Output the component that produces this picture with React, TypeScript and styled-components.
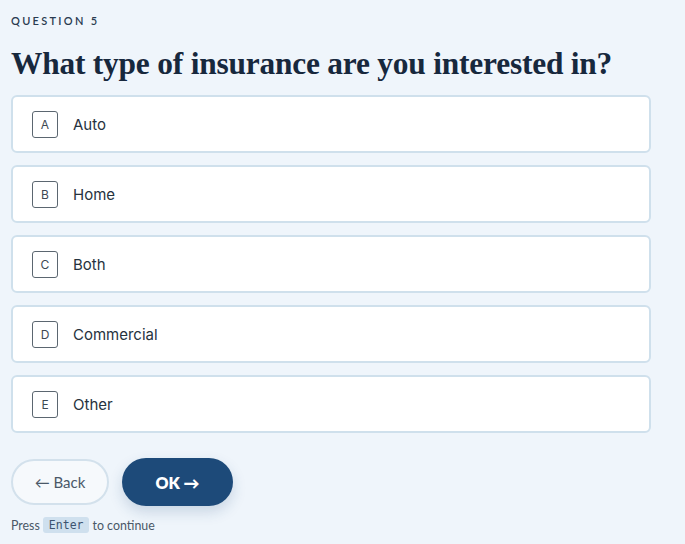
import React from "react";
import styled, { createGlobalStyle } from "styled-components";

const Global = createGlobalStyle`
  html, body { margin: 0; padding: 0; background: #eff5fb; }
  body { font-family: Lato, "Open Sans", sans-serif; color: #1b2b3c; }
`;

const Page = styled.div`
  padding: 14px 34px 0 11px;
  display: flex;
  flex-direction: column;
`;

const Eyebrow = styled.div`
  font-family: Lato, sans-serif;
  font-size: 11px;
  font-weight: 600;
  letter-spacing: 2.3px;
  color: #2a3b50;
  line-height: 14px;
`;

const Title = styled.h1`
  margin: 19px 0 0;
  font-family: "Liberation Serif", "DejaVu Serif", serif;
  font-weight: 700;
  font-size: 31.4px;
  line-height: 34px;
  letter-spacing: -0.2px;
  color: #17283d;
`;

const Options = styled.div`
  margin-top: 14px;
  display: flex;
  flex-direction: column;
  gap: 12px;
`;

const Option = styled.div`
  height: 54px;
  background: #fff;
  border: 2px solid #cfe0ec;
  border-radius: 6px;
  display: flex;
  align-items: center;
  padding-left: 19px;
  gap: 15px;
`;

const Key = styled.span`
  box-sizing: border-box;
  width: 26px;
  height: 27px;
  border: 1px solid #5b6670;
  border-radius: 3px;
  display: flex;
  align-items: center;
  justify-content: center;
  font-family: Inter, sans-serif;
  font-size: 12px;
  color: #3d4853;
`;

const Label = styled.span`
  font-family: Inter, sans-serif;
  font-size: 15px;
  color: #26323e;
`;

const Actions = styled.div`
  margin-top: 25px;
  display: flex;
  align-items: center;
  gap: 13px;
`;

const BackBtn = styled.button`
  box-sizing: border-box;
  width: 98px;
  height: 46px;
  border-radius: 23px;
  border: 2px solid #d3e1ec;
  background: #f6f9fc;
  font-family: Lato, sans-serif;
  font-size: 15px;
  color: #4a5868;
  cursor: pointer;
`;

const OkBtn = styled.button`
  box-sizing: border-box;
  width: 111px;
  height: 48px;
  border-radius: 24px;
  border: none;
  background: #1d4a79;
  color: #fff;
  font-family: Lato, sans-serif;
  font-weight: 800;
  font-size: 16px;
  box-shadow: 0 6px 14px rgba(29, 74, 121, 0.18);
  cursor: pointer;
`;

const Hint = styled.div`
  margin-top: 11px;
  font-family: Lato, sans-serif;
  font-size: 12.4px;
  color: #4a5868;
  display: flex;
  align-items: center;
  gap: 3px;
`;

const Kbd = styled.span`
  font-family: "DejaVu Sans Mono", "Liberation Mono", monospace;
  font-size: 11.5px;
  line-height: 14px;
  background: #cfe0ee;
  color: #3d5470;
  padding: 1px 6px;
  border-radius: 3px;
`;

const options = [
  ["A", "Auto"],
  ["B", "Home"],
  ["C", "Both"],
  ["D", "Commercial"],
  ["E", "Other"],
];

export default function App() {
  return (
    <Page>
      <Global />
      <Eyebrow>QUESTION 5</Eyebrow>
      <Title>What type of insurance are you interested in?</Title>
      <Options>
        {options.map(([k, l]) => (
          <Option key={k}>
            <Key>{k}</Key>
            <Label>{l}</Label>
          </Option>
        ))}
      </Options>
      <Actions>
        <BackBtn>← Back</BackBtn>
        <OkBtn>OK →</OkBtn>
      </Actions>
      <Hint>
        Press <Kbd>Enter</Kbd> to continue
      </Hint>
    </Page>
  );
}
